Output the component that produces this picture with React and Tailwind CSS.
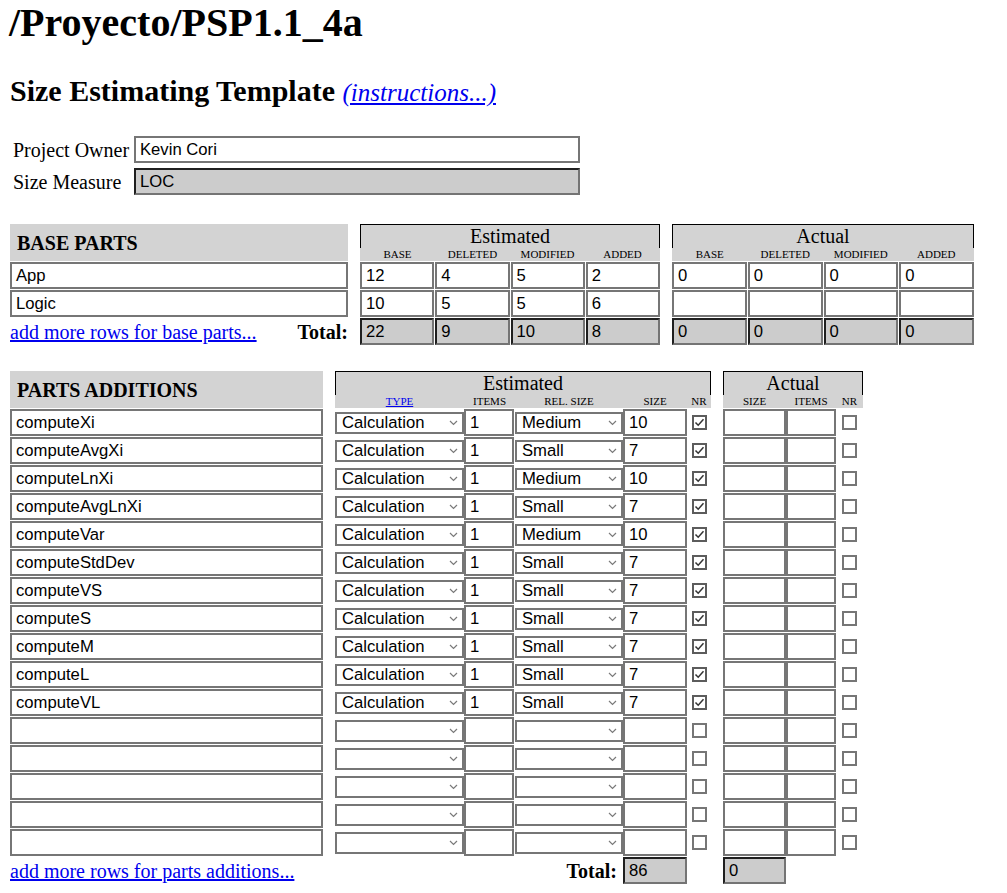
import React from "react";

const SANS = "font-['Liberation_Sans',Arial,sans-serif]";

function Box({ w, value = "", total = false }) {
  const base = total
    ? "bg-[#cccccc] border-2 border-t-[#1f1f1f] border-l-[#1f1f1f] border-r-[#747474] border-b-[#747474]"
    : "bg-white border-2 border-[#767676]";
  return (
    <div className={`${w} h-[27px] shrink-0 ${base} flex items-center pl-[4px] pt-[1px] ${SANS} text-[16.67px] leading-none text-black overflow-hidden whitespace-nowrap`}>
      {value}
    </div>
  );
}

function Chevron() {
  return (
    <svg width="9" height="6" viewBox="0 0 9 6" className="shrink-0">
      <polyline points="1,1 4.5,4.5 8,1" fill="none" stroke="#7a7a7a" strokeWidth="1.2" />
    </svg>
  );
}

function Select({ w, value = "" }) {
  return (
    <div className={`${w} h-full shrink-0 flex items-center`}>
      <div className={`w-full h-[22px] bg-white border-2 border-[#767676] flex items-center justify-between pl-[5px] pr-[4px] pt-[1px] ${SANS} text-[16.67px] leading-none text-black whitespace-nowrap`}>
        <span>{value}</span>
        <Chevron />
      </div>
    </div>
  );
}

function Check({ w, ml, checked }) {
  return (
    <div className={`${w} h-full shrink-0 flex items-center`}>
      <div className={`${ml} w-[15px] h-[15px] bg-white border-2 ${checked ? "border-[#5c5c5c]" : "border-[#767676]"} flex items-center justify-center`}>
        {checked && (
          <svg width="11" height="11" viewBox="0 0 11 11">
            <polyline points="1.5,5.5 4.2,8.2 9.5,2.2" fill="none" stroke="#333" strokeWidth="1.5" />
          </svg>
        )}
      </div>
    </div>
  );
}

function GroupHeader({ title, children, w }) {
  return (
    <div className={`${w} h-[37px] bg-[#d3d3d3] flex flex-col shrink-0`}>
      <div className="h-[24px] border-t border-x border-black text-center text-[20px] leading-[23px]">{title}</div>
      <div className="h-[13px] flex text-[11px] leading-[13px] uppercase">{children}</div>
    </div>
  );
}

const parts = [
  ["computeXi", "Medium", "10"],
  ["computeAvgXi", "Small", "7"],
  ["computeLnXi", "Medium", "10"],
  ["computeAvgLnXi", "Small", "7"],
  ["computeVar", "Medium", "10"],
  ["computeStdDev", "Small", "7"],
  ["computeVS", "Small", "7"],
  ["computeS", "Small", "7"],
  ["computeM", "Small", "7"],
  ["computeL", "Small", "7"],
  ["computeVL", "Small", "7"],
  null,
  null,
  null,
  null,
  null,
];

const baseRows = [
  { name: "App", est: ["12", "4", "5", "2"], act: ["0", "0", "0", "0"] },
  { name: "Logic", est: ["10", "5", "5", "6"], act: ["", "", "", ""] },
];

export default function App() {
  return (
    <div className="w-[1007px] min-h-[893px] bg-white text-black font-['Liberation_Serif','Times_New_Roman',serif] pl-[10px] overflow-hidden">
      <h1 className="h-[46px] text-[40px] leading-[46px] font-bold -ml-[1px]">/Proyecto/PSP1.1_4a</h1>
      <h2 className="mt-[27px] h-[35px] text-[30px] leading-[35px] font-bold whitespace-nowrap">
        Size Estimating Template{" "}
        <a href="#" className="text-[25px] italic font-normal text-[#0000ee] underline">(instructions...)</a>
      </h2>

      {/* Project info */}
      <div className="mt-[28px] flex flex-col gap-[5px]">
        <div className="flex items-center h-[27px]">
          <div className="w-[124px] pl-[3px] text-[20px] leading-none">Project Owner</div>
          <Box w="w-[446px]" value="Kevin Cori" />
        </div>
        <div className="flex items-center h-[27px]">
          <div className="w-[124px] pl-[3px] text-[20px] leading-none">Size Measure</div>
          <Box w="w-[446px]" value="LOC" total />
        </div>
      </div>

      {/* Base parts */}
      <div className="mt-[29px] flex flex-col gap-[1px]">
        <div className="flex items-end">
          <div className="w-[338px] h-[37px] bg-[#d3d3d3] flex items-center pl-[7px] text-[20px] font-bold leading-none shrink-0">BASE PARTS</div>
          <div className="ml-[12px]">
            <GroupHeader title="Estimated" w="w-[300px]">
              {["BASE", "DELETED", "MODIFIED", "ADDED"].map((t) => (
                <div key={t} className="w-[75px] text-center">{t}</div>
              ))}
            </GroupHeader>
          </div>
          <div className="ml-[12px]">
            <GroupHeader title="Actual" w="w-[302px]">
              {["BASE", "DELETED", "MODIFIED", "ADDED"].map((t) => (
                <div key={t} className="w-[75.5px] text-center">{t}</div>
              ))}
            </GroupHeader>
          </div>
        </div>
        {baseRows.map((r) => (
          <div key={r.name} className="flex h-[27px]">
            <Box w="w-[338px]" value={r.name} />
            <div className="ml-[12px] w-[300px] flex gap-[1px]">
              {r.est.map((v, i) => (
                <Box key={i} w="w-[74.25px]" value={v} />
              ))}
            </div>
            <div className="ml-[12px] w-[302px] flex gap-[1px]">
              {r.act.map((v, i) => (
                <Box key={i} w="w-[74.75px]" value={v} />
              ))}
            </div>
          </div>
        ))}
        <div className="flex h-[27px]">
          <div className="w-[338px] flex items-center justify-between text-[20px] leading-none">
            <a href="#" className="text-[#0000ee] underline">add more rows for base parts...</a>
            <span className="font-bold">Total:</span>
          </div>
          <div className="ml-[12px] w-[300px] flex gap-[1px]">
            {["22", "9", "10", "8"].map((v, i) => (
              <Box key={i} w="w-[74.25px]" value={v} total />
            ))}
          </div>
          <div className="ml-[12px] w-[302px] flex gap-[1px]">
            {["0", "0", "0", "0"].map((v, i) => (
              <Box key={i} w="w-[74.75px]" value={v} total />
            ))}
          </div>
        </div>
      </div>

      {/* Parts additions */}
      <div className="mt-[26px] flex flex-col gap-[1px]">
        <div className="flex items-end">
          <div className="w-[313px] h-[37px] bg-[#d3d3d3] flex items-center pl-[7px] text-[20px] font-bold leading-none shrink-0">PARTS ADDITIONS</div>
          <div className="ml-[12px]">
            <GroupHeader title="Estimated" w="w-[376px]">
              <div className="w-[129px] text-center">
                <a href="#" className="text-[#0000ee] underline">TYPE</a>
              </div>
              <div className="w-[51px] text-center">ITEMS</div>
              <div className="w-[108px] text-center">REL. SIZE</div>
              <div className="w-[64px] text-center">SIZE</div>
              <div className="w-[24px] text-center">NR</div>
            </GroupHeader>
          </div>
          <div className="ml-[12px]">
            <GroupHeader title="Actual" w="w-[140px]">
              <div className="w-[63px] text-center">SIZE</div>
              <div className="w-[50px] text-center">ITEMS</div>
              <div className="w-[27px] text-center">NR</div>
            </GroupHeader>
          </div>
        </div>
        {parts.map((p, i) => (
          <div key={i} className="flex h-[27px]">
            <Box w="w-[313px]" value={p ? p[0] : ""} />
            <div className="ml-[12px] w-[376px] flex h-[27px]">
              <Select w="w-[129px]" value={p ? "Calculation" : ""} />
              <Box w="w-[50px]" value={p ? "1" : ""} />
              <div className="w-[1px] shrink-0" />
              <Select w="w-[108px]" value={p ? p[1] : ""} />
              <Box w="w-[64px]" value={p ? p[2] : ""} />
              <Check w="w-[24px]" ml="ml-[5px]" checked={!!p} />
            </div>
            <div className="ml-[12px] w-[140px] flex h-[27px]">
              <Box w="w-[63px]" value="" />
              <Box w="w-[50px]" value="" />
              <Check w="w-[27px]" ml="ml-[6px]" checked={false} />
            </div>
          </div>
        ))}
        <div className="flex h-[28px]">
          <div className="w-[313px] flex items-center text-[20px] leading-none whitespace-nowrap">
            <a href="#" className="text-[#0000ee] underline">add more rows for parts additions...</a>
          </div>
          <div className="ml-[12px] w-[376px] flex h-[27px]">
            <div className="w-[288px] shrink-0 flex items-center justify-end pr-[6px] text-[20px] font-bold leading-none">Total:</div>
            <Box w="w-[64px]" value="86" total />
          </div>
          <div className="ml-[12px] w-[140px] flex h-[27px]">
            <Box w="w-[63px]" value="0" total />
          </div>
        </div>
      </div>
    </div>
  );
}
